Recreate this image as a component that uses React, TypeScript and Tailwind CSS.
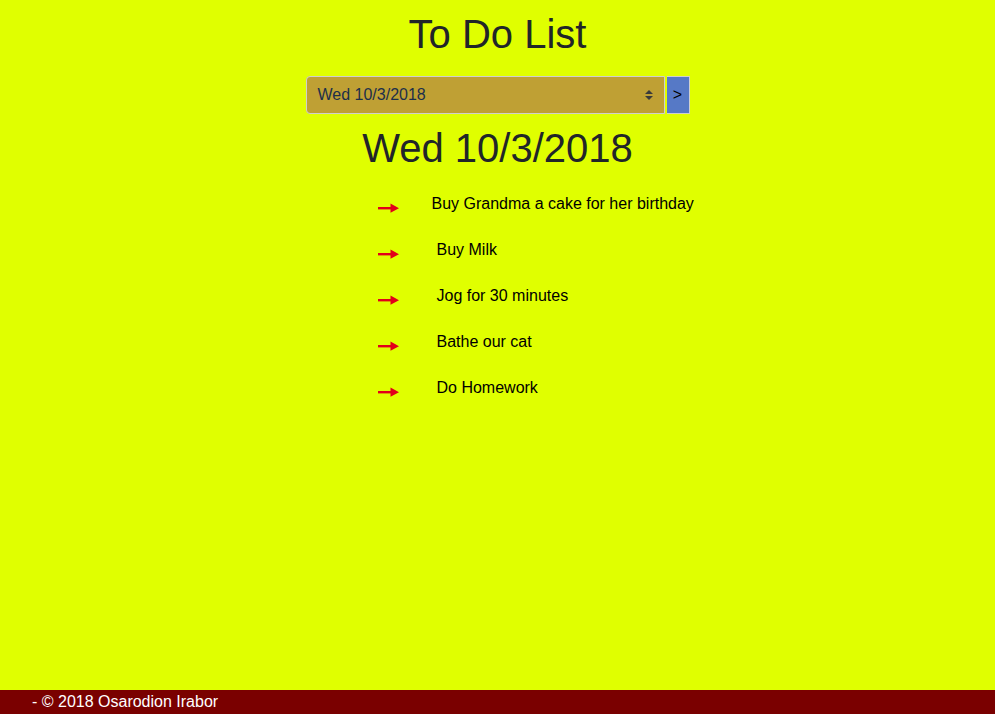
const todos = [
  { text: 'Buy Grandma a cake for her birthday', gap: 'ml-[33px]' },
  { text: 'Buy Milk', gap: 'ml-[38px]' },
  { text: 'Jog for 30 minutes', gap: 'ml-[38px]' },
  { text: 'Bathe our cat', gap: 'ml-[38px]' },
  { text: 'Do Homework', gap: 'ml-[38px]' },
];

const Arrow = () => (
  <svg width="21" height="10" viewBox="0 0 21 10" className="shrink-0">
    <rect x="0" y="4" width="14" height="2.4" fill="#e2001a" />
    <path d="M12.5 0.5 L21 5.2 L12.5 9.8 Z" fill="#e2001a" />
  </svg>
);

export default function App() {
  return (
    <div
      className="min-h-[714px] bg-[#e0ff00] text-[#212529] flex flex-col"
      style={{ fontFamily: '"Liberation Sans", Arial, sans-serif' }}
    >
      <main className="flex-1 flex flex-col items-center">
        <h1 className="mt-[10px] text-[40px] leading-[48px]">To Do List</h1>

        <div className="mt-[18px] flex w-[384px] h-[38px]">
          <div className="relative flex-1 flex items-center bg-[#bfa034] border border-[#cfcfcf] rounded-l-[4px] pl-[11px] text-[16px] text-[#1c2f4a]">
            Wed 10/3/2018
            <div className="absolute right-[11px] top-1/2 -translate-y-1/2 flex flex-col gap-[2px]">
              <span className="block w-0 h-0 border-l-[4px] border-r-[4px] border-b-[4px] border-l-transparent border-r-transparent border-b-[#3a3a3a]" />
              <span className="block w-0 h-0 border-l-[4px] border-r-[4px] border-t-[4px] border-l-transparent border-r-transparent border-t-[#3a3a3a]" />
            </div>
          </div>
          <button className="w-[23px] ml-[2px] bg-[#5679c6] border border-[#cfcfcf] border-l-0 text-black text-[16px] leading-none">
            &gt;
          </button>
        </div>

        <h2 className="mt-[10px] text-[40px] leading-[48px]">Wed 10/3/2018</h2>

        <ul className="w-[384px] mt-[20px] pl-[72px] text-black text-[16px] leading-[24px]">
          {todos.map((t) => (
            <li key={t.text} className="flex items-center h-[24px] mb-[22px] whitespace-nowrap">
              <span className="mt-[7px] flex">
                <Arrow />
              </span>
              <span className={t.gap}>{t.text}</span>
            </li>
          ))}
        </ul>
      </main>

      <footer className="fixed bottom-0 left-0 right-0 h-[24px] bg-[#7a0000] text-white text-[16px] leading-[24px] pl-[32px]">
        - © 2018 Osarodion Irabor
      </footer>
    </div>
  );
}
